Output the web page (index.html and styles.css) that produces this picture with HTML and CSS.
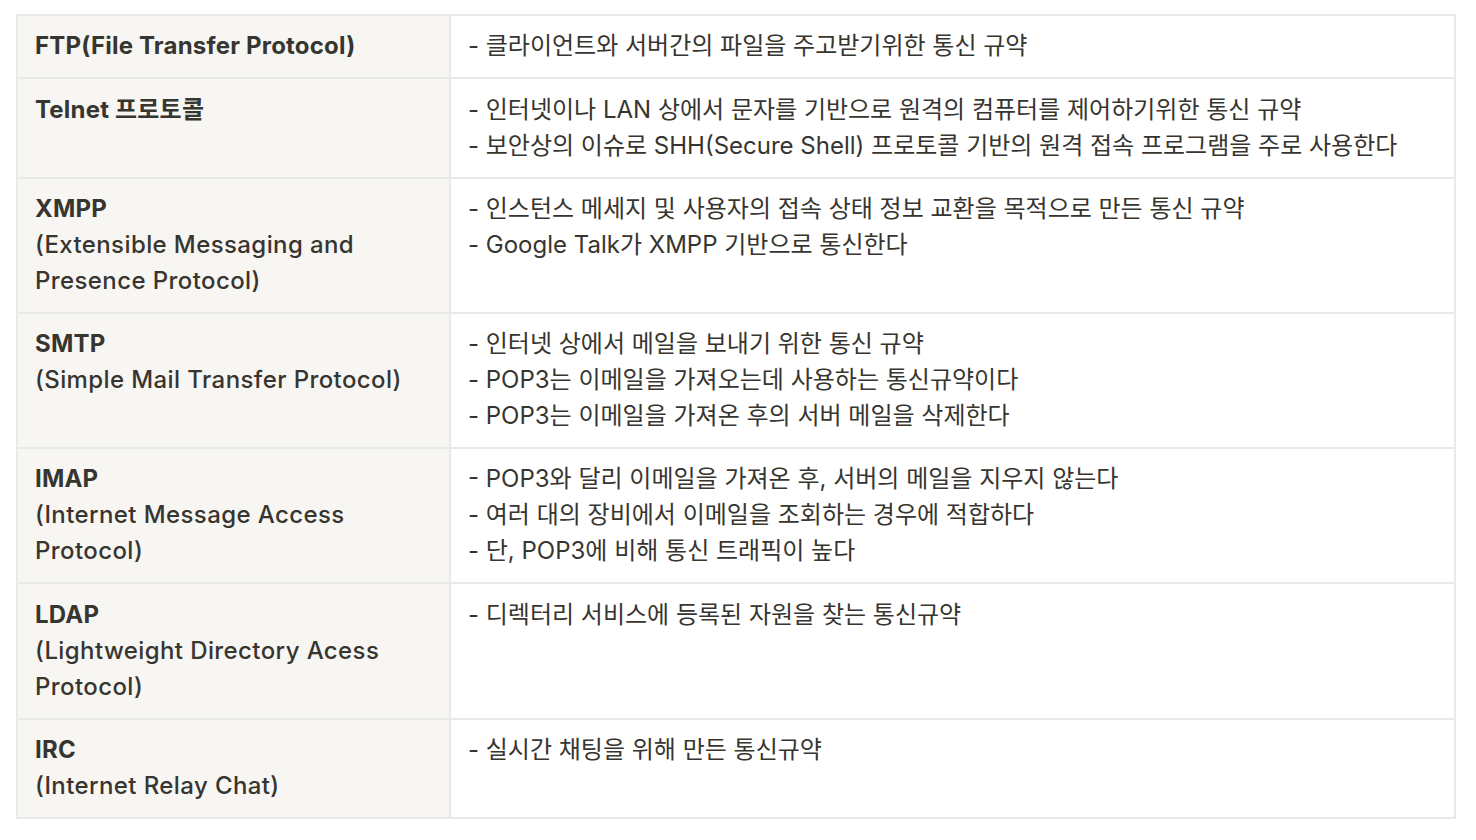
FILE: index.html
```html
<!DOCTYPE html>
<html lang="ko">
<head>
<meta charset="utf-8">
<link rel="stylesheet" href="styles.css">
</head>
<body>
<table class="proto-table">
  <colgroup><col class="col-name"><col class="col-desc"></colgroup>
  <tbody>
    <tr>
      <th><span class="strong">FTP(File Transfer Protocol)</span></th>
      <td>- 클라이언트와 서버간의 파일을 주고받기위한 통신 규약</td>
    </tr>
    <tr>
      <th><span class="strong">Telnet 프로토콜</span></th>
      <td>- 인터넷이나 LAN 상에서 문자를 기반으로 원격의 컴퓨터를 제어하기위한 통신 규약<br>- 보안상의 이슈로 SHH(Secure Shell) 프로토콜 기반의 원격 접속 프로그램을 주로 사용한다</td>
    </tr>
    <tr>
      <th><span class="strong">XMPP</span><br>(Extensible Messaging and<br>Presence Protocol)</th>
      <td>- 인스턴스 메세지 및 사용자의 접속 상태 정보 교환을 목적으로 만든 통신 규약<br>- Google Talk가 XMPP 기반으로 통신한다</td>
    </tr>
    <tr>
      <th><span class="strong">SMTP</span><br>(Simple Mail Transfer Protocol)</th>
      <td>- 인터넷 상에서 메일을 보내기 위한 통신 규약<br>- POP3는 이메일을 가져오는데 사용하는 통신규약이다<br>- POP3는 이메일을 가져온 후의 서버 메일을 삭제한다</td>
    </tr>
    <tr>
      <th><span class="strong">IMAP</span><br>(Internet Message Access<br>Protocol)</th>
      <td>- POP3와 달리 이메일을 가져온 후, 서버의 메일을 지우지 않는다<br>- 여러 대의 장비에서 이메일을 조회하는 경우에 적합하다<br>- 단, POP3에 비해 통신 트래픽이 높다</td>
    </tr>
    <tr>
      <th><span class="strong">LDAP</span><br>(Lightweight Directory Acess<br>Protocol)</th>
      <td>- 디렉터리 서비스에 등록된 자원을 찾는 통신규약</td>
    </tr>
    <tr>
      <th><span class="strong">IRC</span><br>(Internet Relay Chat)</th>
      <td>- 실시간 채팅을 위해 만든 통신규약</td>
    </tr>
  </tbody>
</table>
</body>
</html>
```

FILE: styles.css
```css
html, body {
  margin: 0;
  padding: 0;
  background: #ffffff;
}

body {
  padding: 14px 0 0 16px;
  font-family: Inter, "Noto Sans CJK KR", sans-serif;
  color: #37352f;
}

.proto-table {
  border-collapse: collapse;
  width: 1440px;
  table-layout: fixed;
  font-size: 24px;
  line-height: 36px;
}

.col-name { width: 433px; }

.proto-table th,
.proto-table td {
  border: 2px solid #e9e9e7;
  padding: 12.3px 16px 13px 17px;
  vertical-align: top;
  text-align: left;
  white-space: nowrap;
}

.proto-table th {
  background: #f7f6f3;
  font-weight: 500;
  letter-spacing: 0.4px;
}

.proto-table td {
  font-weight: 400;
}

.strong {
  font-weight: 700;
  letter-spacing: 0.2px;
}
```
